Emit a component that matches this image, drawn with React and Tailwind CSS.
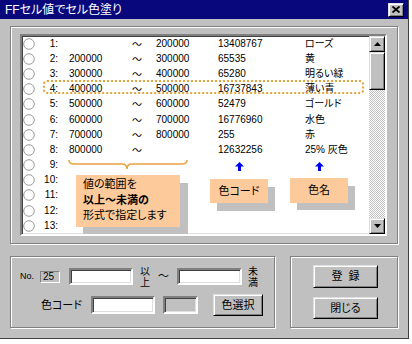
const rows = [
  ["1", "", "200000", "13408767", "ローズ", true],
  ["2", "200000", "300000", "65535", "黄", true],
  ["3", "300000", "400000", "65280", "明るい緑", true],
  ["4", "400000", "500000", "16737843", "薄い青", true],
  ["5", "500000", "600000", "52479", "ゴールド", true],
  ["6", "600000", "700000", "16776960", "水色", true],
  ["7", "700000", "800000", "255", "赤", true],
  ["8", "800000", "", "12632256", "25% 灰色", true],
  ["9", "", "", "", "", false],
  ["10", "", "", "", "", false],
  ["11", "", "", "", "", false],
  ["12", "", "", "", "", false],
  ["13", "", "", "", "", false],
];

const raised =
  "bg-[#c0c0c0] border border-t-[#dfdfdf] border-l-[#dfdfdf] border-r-black border-b-black shadow-[inset_1px_1px_0_#fff,inset_-1px_-1px_0_#808080]";
const sunken =
  "border-2 border-t-[#808080] border-l-[#808080] border-r-white border-b-white shadow-[inset_1px_1px_0_#404040,inset_-1px_-1px_0_#dfdfdf]";
const etched =
  "border border-[#808080] shadow-[inset_1px_1px_0_#fff,1px_1px_0_#fff]";

function Radio() {
  return (
    <svg width="12" height="12" viewBox="0 0 12 12" className="shrink-0">
      <circle cx="6" cy="6" r="5.3" fill="#fff" stroke="#9a9a9a" />
    </svg>
  );
}

function ScrollBtn({ down }) {
  return (
    <div className={`h-[16px] flex items-center justify-center ${raised}`}>
      <svg width="7" height="4" viewBox="0 0 7 4">
        <path d={down ? "M0 0H7L3.5 4Z" : "M0 4H7L3.5 0Z"} fill="#000" />
      </svg>
    </div>
  );
}

function Arrow({ className }) {
  return (
    <svg width="9" height="9" viewBox="0 0 9 9" className={className}>
      <path d="M4.5 0L9 4.5H6V9H3V4.5H0Z" fill="#0000ee" />
    </svg>
  );
}

function Button({ children, className = "" }) {
  return (
    <div className={`flex items-center justify-center text-[11px] ${raised} ${className}`}>
      {children}
    </div>
  );
}

export default function App() {
  return (
    <div className="w-[412px] h-[344px] bg-white font-['Liberation_Sans','Noto_Sans_CJK_JP',sans-serif] [font-feature-settings:'palt'] text-black">
      <div className="relative w-[409px] h-[339px] bg-[#c0c0c0] border-r border-b border-[#404040] flex flex-col">
        {/* title bar */}
        <div className="h-[19px] bg-[#08087c] flex items-center justify-between pl-[5px] pr-[4px]">
          <span className="text-white text-[12px] leading-none">FFセル値でセル色塗り</span>
          <div className={`w-[16px] h-[14px] flex items-center justify-center ${raised}`}>
            <svg width="8" height="7" viewBox="0 0 8 7">
              <path d="M0.5 0.5L7.5 6.5M7.5 0.5L0.5 6.5" stroke="#000" strokeWidth="1.8" />
            </svg>
          </div>
        </div>

        {/* list group */}
        <div className={`mt-[7px] ml-[10px] w-[388px] h-[218px] pl-[9px] pt-[7px] pr-[10px] pb-[7px] ${etched}`}>
          <div className={`h-full bg-white flex ${sunken}`}>
            <div className="flex-1 pl-[1px] text-[10px] leading-none">
              {rows.map(([n, a, b, code, name, tilde]) => (
                <div key={n} className="h-[15.2px] flex items-center">
                  <Radio />
                  <span className="w-[23px] text-right">{n}:</span>
                  <span className="ml-[11px] w-[63px]">{a}</span>
                  <span className="w-[24px] font-['Noto_Sans_CJK_JP']">{tilde ? "〜" : ""}</span>
                  <span className="w-[62px]">{b}</span>
                  <span className="w-[87px]">{code}</span>
                  <span>{name}</span>
                </div>
              ))}
            </div>
            <div className="w-[16px] flex flex-col">
              <ScrollBtn />
              <div className={`h-[38px] ${raised}`} />
              <div className="flex-1 bg-[repeating-conic-gradient(#c0c0c0_0_25%,#ffffff_0_50%)] bg-[length:2px_2px]" />
              <ScrollBtn down />
            </div>
          </div>
        </div>

        {/* bottom groups */}
        <div className="mt-[12px] ml-[10px] flex gap-[15px]">
          <div className={`w-[265px] h-[72px] pl-[9px] pt-[9px] flex flex-col ${etched}`}>
            <div className="h-[21px] flex items-center">
              <span className="w-[13px] text-[9px] leading-none">No.</span>
              <div className="ml-[7px] w-[20px] h-[12px] border border-t-[#808080] border-l-[#808080] border-r-white border-b-white text-[10px] leading-none pl-[2px] flex items-center">
                25
              </div>
              <div className={`ml-[9px] w-[64px] h-[17px] bg-white ${sunken}`} />
              <div className="ml-[7px] w-[12px] flex flex-col text-[10px] leading-[11px]">
                <span>以</span>
                <span>上</span>
              </div>
              <span className="ml-[6px] w-[9px] text-[11px] leading-none">～</span>
              <div className={`ml-[10px] w-[65px] h-[17px] bg-white ${sunken}`} />
              <div className="ml-[6px] w-[12px] flex flex-col text-[10px] leading-[11px]">
                <span>未</span>
                <span>満</span>
              </div>
            </div>
            <div className="mt-[7px] h-[22px] flex items-center">
              <span className="w-[62px] text-right text-[11px] leading-none">色コード</span>
              <div className={`ml-[9px] w-[64px] h-[18px] bg-white ${sunken}`} />
              <div className={`ml-[8px] w-[35px] h-[18px] ${sunken}`} />
              <Button className="ml-[15px] w-[50px] h-[22px]">色選択</Button>
            </div>
          </div>
          <div className={`w-[108px] h-[72px] pl-[22px] pt-[8px] flex flex-col gap-[9px] ${etched}`}>
            <Button className="w-[65px] h-[23px]">登&nbsp;&nbsp;録</Button>
            <Button className="w-[65px] h-[22px]">閉じる</Button>
          </div>
        </div>

        {/* annotations */}
        <div className="absolute left-[43px] top-[80px] w-[321px] h-[14px] border-2 border-dotted border-[#e8a33c] rounded-[4px]" />
        <svg width="120" height="11" viewBox="0 0 120 11" className="absolute left-[68px] top-[159px]">
          <path
            d="M1 1Q1 5 6 5L54 5Q59 5 59 10Q59 5 64 5L114 5Q119 5 119 1"
            fill="none"
            stroke="#e9a23f"
            strokeWidth="1.5"
          />
        </svg>
        <div className="absolute left-[83px] top-[183px] w-[105px] h-[51px] bg-[#c0c0c0]" />
        <div className="absolute left-[76px] top-[175px] w-[104px] h-[52px] bg-[#fdca9b] pl-[7px] pt-[2px] text-[11px] leading-[15.5px]">
          <div>値の範囲を</div>
          <div className="font-bold">以上～未満の</div>
          <div>形式で指定します</div>
        </div>
        <Arrow className="absolute left-[235px] top-[162px]" />
        <Arrow className="absolute left-[315px] top-[162px]" />
        <div className="absolute left-[217px] top-[187px] w-[58px] h-[24px] bg-[#c0c0c0]" />
        <div className="absolute left-[210px] top-[179px] w-[58px] h-[24px] bg-[#fdca9b] flex items-center justify-center text-[11px]">
          色コード
        </div>
        <div className="absolute left-[297px] top-[186px] w-[58px] h-[24px] bg-[#c0c0c0]" />
        <div className="absolute left-[290px] top-[178px] w-[58px] h-[25px] bg-[#fdca9b] flex items-center justify-center text-[11px]">
          色名
        </div>
      </div>
    </div>
  );
}
